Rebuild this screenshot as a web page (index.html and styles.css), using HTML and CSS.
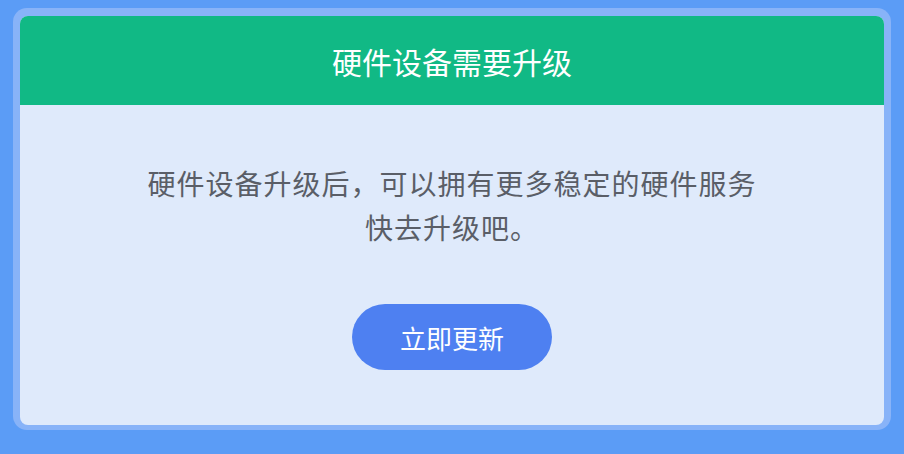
FILE: index.html
```html
<!DOCTYPE html>
<html lang="zh-CN">
<head>
    <meta charset="UTF-8">
    <meta name="viewport" content="width=device-width, initial-scale=1.0">
    <title>硬件设备需要升级</title>
    <link rel="stylesheet" href="styles.css">
</head>
<body>
    <!-- 升级提示弹窗 -->
    <div class="frame">
        <div class="dialog">
            <div class="dialog-header">硬件设备需要升级</div>
            <div class="dialog-body">
                <p class="message">硬件设备升级后，可以拥有更多稳定的硬件服务<br>快去升级吧。</p>
                <button class="update-btn">立即更新</button>
            </div>
        </div>
    </div>
</body>
</html>
```

FILE: styles.css
```css
body {
    margin: 0;
    height: 454px;
    background-color: #5b9cf6;
    font-family: "Noto Sans CJK SC", "Noto Sans", sans-serif;
    overflow: hidden;
}
.frame {
    margin: 8px 13px 0 13px;
    padding: 8px 7px 5px;
    background-color: #88b3f8;
    border-radius: 14px;
}
.dialog {
    background-color: #dfeafb;
    border-radius: 8px;
    overflow: hidden;
}
.dialog-header {
    height: 89px;
    display: flex;
    align-items: center;
    justify-content: center;
    background-color: #11b985;
    color: #fff;
    font-size: 30px;
}
.dialog-body {
    display: flex;
    flex-direction: column;
    align-items: center;
    padding: 56px 0 55px;
}
.message {
    margin: 0 0 55px;
    font-size: 28px;
    line-height: 44px;
    letter-spacing: 1px;
    color: #5a5e67;
    text-align: center;
}
.update-btn {
    width: 200px;
    height: 66px;
    border: none;
    border-radius: 33px;
    background-color: #4e80f1;
    color: #fff;
    font-family: inherit;
    font-size: 26px;
    cursor: pointer;
}
```
